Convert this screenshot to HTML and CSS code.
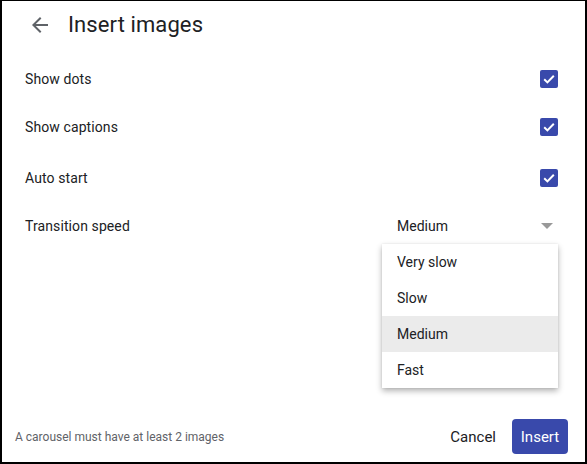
FILE: index.html
```html
<!DOCTYPE html>
<html>
<head>
<meta charset="utf-8">
<link rel="stylesheet" href="styles.css">
</head>
<body>
<div class="dialog">
  <header class="head">
    <svg class="back" width="24" height="24" viewBox="0 0 24 24"><path d="M20 11H7.83l5.59-5.59L12 4l-8 8 8 8 1.41-1.41L7.83 13H20v-2z" fill="#5f6368"/></svg>
    <h1 class="title">Insert images</h1>
  </header>
  <div class="rows">
    <div class="row r1"><span class="label">Show dots</span><span class="cb"><svg width="18" height="18" viewBox="0 0 18 18"><path d="M4.2 9.3l3.2 3.1 6.4-6.6" fill="none" stroke="#fff" stroke-width="2"/></svg></span></div>
    <div class="row r2"><span class="label">Show captions</span><span class="cb"><svg width="18" height="18" viewBox="0 0 18 18"><path d="M4.2 9.3l3.2 3.1 6.4-6.6" fill="none" stroke="#fff" stroke-width="2"/></svg></span></div>
    <div class="row r3"><span class="label">Auto start</span><span class="cb"><svg width="18" height="18" viewBox="0 0 18 18"><path d="M4.2 9.3l3.2 3.1 6.4-6.6" fill="none" stroke="#fff" stroke-width="2"/></svg></span></div>
    <div class="row r4"><span class="label">Transition speed</span>
      <div class="select">
        <span class="value">Medium</span>
        <span class="caret"></span>
        <ul class="menu">
          <li>Very slow</li>
          <li>Slow</li>
          <li class="active">Medium</li>
          <li>Fast</li>
        </ul>
      </div>
    </div>
  </div>
  <footer class="foot">
    <span class="note">A carousel must have at least 2 images</span>
    <div class="actions">
      <button class="btn cancel">Cancel</button>
      <button class="btn insert">Insert</button>
    </div>
  </footer>
</div>
</body>
</html>
```
FILE: styles.css
```css
* { box-sizing: border-box; }
html, body { margin: 0; padding: 0; background: #fff; }
body { font-family: Roboto, "Liberation Sans", Arial, sans-serif; color: #202124; }
.dialog {
  width: 587px; height: 464px;
  border-top: 1px solid #000;
  border-left: 2px solid #000;
  border-right: 2px solid #000;
  border-bottom: 2px solid #000;
  display: flex; flex-direction: column;
  position: relative;
}
.head { display: flex; align-items: center; height: 47px; padding-left: 26px; }
.back { display: block; margin-right: 16px; }
.title { margin: 0; font-size: 22px; font-weight: 400; color: #202124; letter-spacing: 0.1px; }
.rows { display: flex; flex-direction: column; padding: 0 27px 0 23px; }
.row { display: flex; align-items: center; justify-content: space-between; font-size: 14px; height: 50px; }
.r1 { height: 61px; }
.r2 { height: 36px; }
.r3 { height: 66px; }
.r4 { height: 30px; }
.label { letter-spacing: 0.1px; }
.cb { width: 18px; height: 18px; background: #3949ab; border-radius: 2px; display: block; }
.cb svg { display: block; }
.select { position: relative; width: 176px; height: 30px; display: flex; align-items: center; justify-content: space-between; padding: 0 5px 0 15px; }
.value { font-size: 14px; }
.caret { width: 0; height: 0; border-left: 6px solid transparent; border-right: 6px solid transparent; border-top: 6px solid #999; }
.menu {
  position: absolute; left: 0; top: 33px; width: 176px;
  margin: 0; padding: 0; list-style: none; background: #fff;
  box-shadow: 0 3px 6px rgba(0,0,0,0.3), 0 0 2px rgba(0,0,0,0.08);
  z-index: 5;
}
.menu li { height: 36px; display: flex; align-items: center; padding-left: 15px; font-size: 14px; }
.menu li.active { background: #ebebeb; }
.foot { margin-top: auto; display: flex; align-items: center; justify-content: space-between; padding: 0 17px 8px 13px; }
.note { font-size: 12px; color: #5f6368; }
.actions { display: flex; align-items: center; gap: 8px; }
.btn { font-family: inherit; font-size: 15px; border: none; background: none; cursor: pointer; height: 35px; border-radius: 4px; }
.cancel { color: #202124; padding: 0 8px; }
.insert { background: #3949ab; color: #fff; width: 56px; padding: 0; }
```
